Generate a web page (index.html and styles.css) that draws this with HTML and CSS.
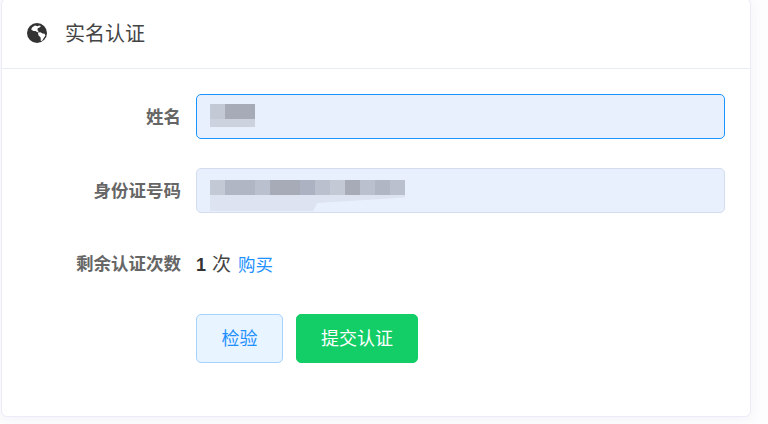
FILE: index.html
```html
<!DOCTYPE html>
<html lang="zh-CN">
  <head>
    <meta charset="UTF-8" />
    <meta name="viewport" content="width=device-width, initial-scale=1.0" />
    <title>实名认证</title>
    <link rel="stylesheet" href="styles.css">
  </head>
  <body>
    <div class="card">
      <div class="card-header">
        <svg class="globe" viewBox="0 0 20 20" aria-hidden="true">
          <circle cx="10" cy="10" r="10" fill="#333"/>
          <path fill="#fff" d="M5 4.5 8 2.6 10.5 3.2 12 2.4 14 3 12.5 4.6 10.8 5.2 10.4 7.2 11.8 8.2 10.2 9.2 8.6 8 6.4 8 4.2 6.6Z"/>
          <path fill="#fff" d="M10.8 9.6 13.4 9.2 15.6 10.6 17.6 10.8 18.4 12.6 16.6 15.2 15 18 13.8 17.8 13.6 14.6 11.6 12.4Z"/>
        </svg>
        <span class="card-title">实名认证</span>
      </div>
      <form class="form">
        <div class="form-row">
          <label class="form-label">姓名</label>
          <div class="field field-focus">
            <div class="mosaic mosaic-name">
              <i class="m1"></i><i class="m4"></i><i class="m4"></i>
            </div>
            <div class="mosaic-fade mosaic-fade-name"></div>
          </div>
        </div>
        <div class="form-row">
          <label class="form-label">身份证号码</label>
          <div class="field">
            <div class="mosaic mosaic-id">
              <i class="m1"></i><i class="m2"></i><i class="m2"></i><i class="m5"></i><i class="m4"></i>
              <i class="m4"></i><i class="m3"></i><i class="m5"></i><i class="m1"></i><i class="m4"></i>
              <i class="m5"></i><i class="m2"></i><i class="m5"></i>
            </div>
            <div class="mosaic-fade mosaic-fade-id"></div>
          </div>
        </div>
        <div class="form-row form-row-text">
          <label class="form-label">剩余认证次数</label>
          <div class="count"><b>1</b> <span class="count-unit">次</span> <a class="link" href="#">购买</a></div>
        </div>
        <div class="form-actions">
          <button type="button" class="btn btn-check">检验</button>
          <button type="button" class="btn btn-submit">提交认证</button>
        </div>
      </form>
    </div>
  </body>
</html>
```
FILE: styles.css
```css
html,
body {
  height: 100%;
}

body {
  margin: 0;
  overflow: hidden;
  background-color: #fdfdfe;
  font-family: "Liberation Sans", "Noto Sans CJK SC", sans-serif;
  color: #333;
}

.card {
  width: 750px;
  height: 419px;
  margin: -2px 0 0 1px;
  box-sizing: border-box;
  background-color: #fff;
  border: 1px solid #ecebf8;
  border-radius: 6px;
  box-shadow: 0 2px 12px rgba(120, 120, 180, 0.08);
}

.card-header {
  display: flex;
  align-items: center;
  height: 70px;
  box-sizing: border-box;
  padding: 0 0 1px 25px;
  border-bottom: 1px solid #e8ecf5;
}

.globe {
  width: 20px;
  height: 20px;
  margin-right: 18px;
}

.card-title {
  padding-bottom: 1px;
  font-size: 20px;
  color: #444;
}

.form {
  display: flex;
  flex-direction: column;
  gap: 29px;
  padding: 25px 25px 0 0;
}

.form-row {
  display: flex;
  align-items: center;
  height: 45px;
}

.form-row-text {
  height: 43px;
}

.form-label {
  width: 179px;
  margin-right: 15px;
  padding-bottom: 3px;
  text-align: right;
  font-size: 17.5px;
  font-weight: bold;
  color: #666;
}

.field {
  position: relative;
  flex: 1;
  height: 45px;
  box-sizing: border-box;
  background-color: #e8f0fe;
  border: 1px solid #d3dded;
  border-radius: 5px;
}

.field-focus {
  border-color: #1a94ff;
}

.mosaic {
  position: absolute;
  left: 13px;
  display: flex;
  height: 15px;
}

.mosaic-name {
  top: 9px;
}

.mosaic-id {
  top: 11px;
}

.mosaic i {
  width: 15px;
}

.m1 { background-color: #c4c9d6; }
.m2 { background-color: #b1b6c4; }
.m3 { background-color: #adb2c2; }
.m4 { background-color: #a7abb7; }
.m5 { background-color: #bac0cd; }

.mosaic-fade {
  position: absolute;
  left: 13px;
}

.mosaic-fade-name {
  top: 24px;
  width: 45px;
  height: 8px;
  background-color: #cdd2df;
}

.mosaic-fade-id {
  top: 26px;
  width: 195px;
  height: 16px;
  background-color: #dde3f0;
  clip-path: polygon(0 0, 100% 0, 100% 15%, 55% 50%, 53% 100%, 0 100%);
}

.count {
  padding-bottom: 3px;
  font-size: 18px;
  color: #444;
}

.count b {
  color: #333;
}

.count-unit {
  margin-left: 1px;
  font-size: 19px;
}

.link {
  margin-left: 2px;
  font-size: 17.5px;
  color: #1e90ff;
  text-decoration: none;
}

.form-actions {
  display: flex;
  gap: 13px;
  margin-left: 194px;
}

.btn {
  height: 49px;
  padding: 0 0 3px;
  border-radius: 5px;
  font-family: inherit;
  font-size: 18px;
}

.btn-check {
  width: 87px;
  background-color: #e8f4ff;
  border: 1px solid #a5d3ff;
  color: #1e90ff;
}

.btn-submit {
  width: 122px;
  background-color: #13ce66;
  border: 1px solid #13ce66;
  color: #fff;
}
```
